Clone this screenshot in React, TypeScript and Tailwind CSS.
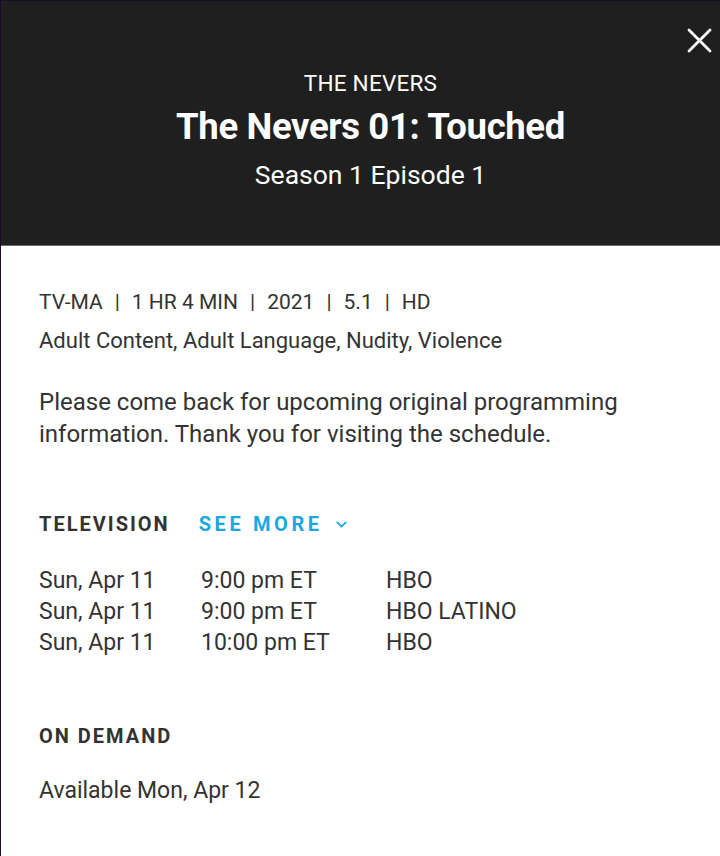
import { ChevronDown } from 'lucide-react';

const airings = [
  { date: 'Sun, Apr 11', time: '9:00 pm ET', channel: 'HBO' },
  { date: 'Sun, Apr 11', time: '9:00 pm ET', channel: 'HBO LATINO' },
  { date: 'Sun, Apr 11', time: '10:00 pm ET', channel: 'HBO' },
];

const meta = ['TV-MA', '1 HR 4 MIN', '2021', '5.1', 'HD'];

export default function App() {
  return (
    <div
      className="w-[720px] h-[856px] bg-white border-l border-t border-[#1a0b2a] overflow-hidden text-[#333333]"
      style={{ fontFamily: 'Roboto, "Liberation Sans", sans-serif' }}
    >
      {/* Header */}
      <header className="relative h-[245px] bg-[#1f1f1f] border-b border-[#6b6b6b] flex flex-col items-center pt-[70px] pl-[20px] text-white">
        <button className="absolute top-[27px] right-[8px] text-white">
          <svg width="25" height="25" viewBox="0 0 25 25" fill="none" stroke="currentColor" strokeWidth="2.8" strokeLinecap="round">
            <path d="M2 2 L23 23 M23 2 L2 23" />
          </svg>
        </button>
        <p className="text-[22.5px] leading-[24px] tracking-[0.01em]">THE NEVERS</p>
        <h1 className="mt-[12px] text-[36.5px] leading-[40px] font-bold tracking-[-0.01em]">The Nevers 01: Touched</h1>
        <p className="mt-[13px] text-[26.5px] leading-[30px]">Season 1 Episode 1</p>
      </header>

      <div className="pl-[38px] pr-6 pt-[44px]">
        <p className="text-[21px] leading-[24px] flex">
          {meta.map((m, i) => (
            <span key={m} className="flex">
              {i > 0 && <span className="mx-[12px]">|</span>}
              {m}
            </span>
          ))}
        </p>
        <p className="mt-[15px] text-[22px] leading-[24px]">Adult Content, Adult Language, Nudity, Violence</p>

        <p className="mt-[33px] text-[24px] leading-[32px] w-[620px]">
          Please come back for upcoming original programming information. Thank you for visiting the schedule.
        </p>

        <div className="mt-[62px] flex items-center gap-[29px]">
          <h2 className="text-[20px] leading-[24px] font-bold tracking-[0.1em]">TELEVISION</h2>
          <button className="flex items-center gap-[10px] text-[#1ba8de] text-[20px] leading-[24px] font-bold tracking-[0.18em]">
            SEE MORE
            <ChevronDown className="w-[17px] h-[17px]" strokeWidth={2.5} />
          </button>
        </div>

        <div className="mt-[29px] flex flex-col">
          {airings.map((a, i) => (
            <div key={i} className="flex text-[23px] leading-[31px]">
              <span className="w-[162px]">{a.date}</span>
              <span className="w-[185px]">{a.time}</span>
              <span>{a.channel}</span>
            </div>
          ))}
        </div>

        <h2 className="mt-[66px] text-[20px] leading-[24px] font-bold tracking-[0.1em]">ON DEMAND</h2>
        <p className="mt-[29px] text-[23px] leading-[28px]">Available Mon, Apr 12</p>
      </div>
    </div>
  );
}
